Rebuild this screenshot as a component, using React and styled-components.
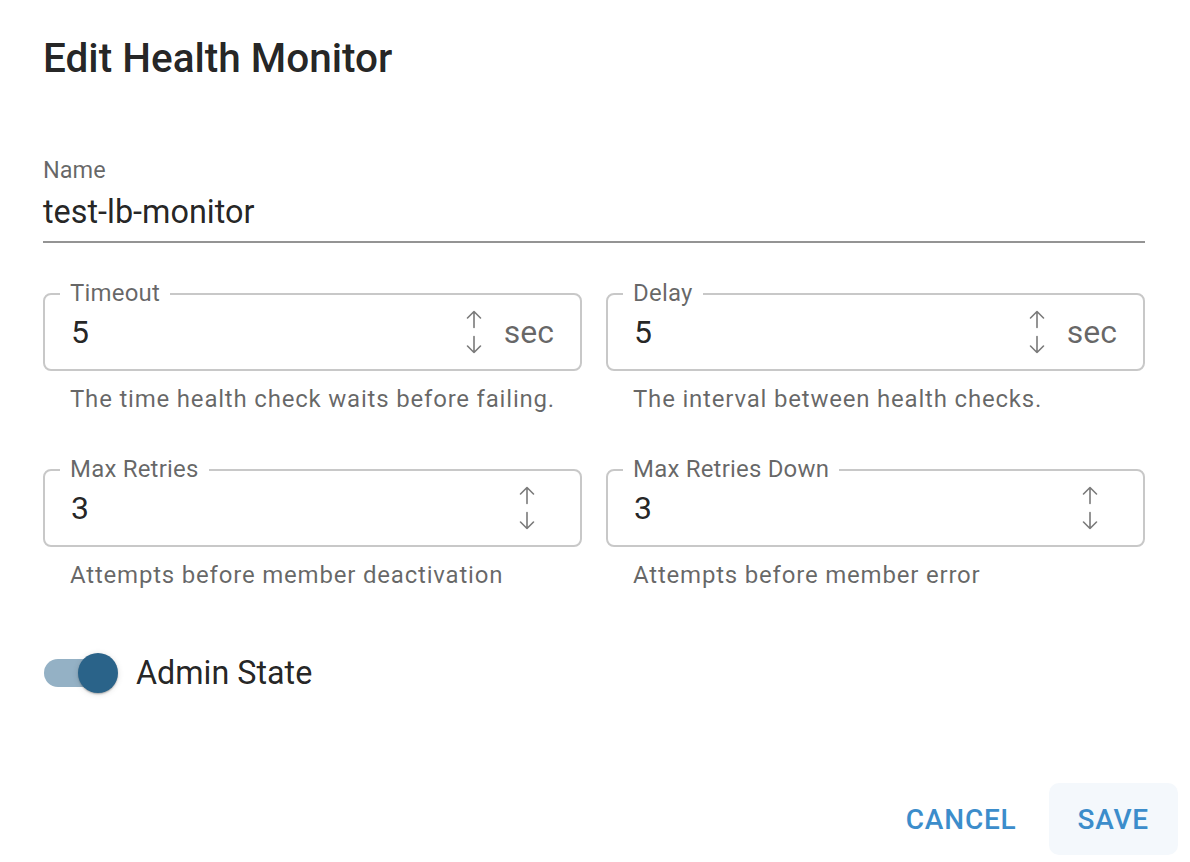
import React from 'react'
import styled, { createGlobalStyle } from 'styled-components'

const GlobalStyle = createGlobalStyle`
    html, body {
        margin: 0;
        padding: 0;
        background: #ffffff;
    }
    body {
        font-family: Roboto, "Liberation Sans", Arial, sans-serif;
        color: rgba(0, 0, 0, 0.87);
    }
`

function SpinArrows() {
  return (
    <Spinner width="16" height="44" viewBox="0 0 16 44">
        <path d="M8 1.5V17.5M1.5 8L8 1.5L14.5 8" />
        <path d="M8 26.5V42.5M1.5 36L8 42.5L14.5 36" />
    </Spinner>
  )
}

function NumberField({label, value, unit, helper}) {
  return (
    <FieldWrap>
        <OutlinedBox unit={unit}>
            <FloatLabel>{label}</FloatLabel>
            <Value>{value}</Value>
            <SpinArrows />
            {unit && <Unit>{unit}</Unit>}
        </OutlinedBox>
        <Helper>{helper}</Helper>
    </FieldWrap>
  )
}

function App() {
  return (
    <>
        <GlobalStyle />
        <Dialog>
            <Content>
                <Title>Edit Health Monitor</Title>
                <NameField>
                    <NameLabel>Name</NameLabel>
                    <NameInput>test-lb-monitor</NameInput>
                </NameField>
                <FieldGrid>
                    <NumberField label="Timeout" value="5" unit="sec" helper="The time health check waits before failing." />
                    <NumberField label="Delay" value="5" unit="sec" helper="The interval between health checks." />
                    <NumberField label="Max Retries" value="3" helper="Attempts before member deactivation" />
                    <NumberField label="Max Retries Down" value="3" helper="Attempts before member error" />
                </FieldGrid>
                <SwitchRow>
                    <Track>
                        <Thumb />
                    </Track>
                    <SwitchLabel>Admin State</SwitchLabel>
                </SwitchRow>
            </Content>
            <Actions>
                <ActionButton>Cancel</ActionButton>
                <ActionButton filled>Save</ActionButton>
            </Actions>
        </Dialog>
    </>
  )
}

const Dialog = styled.div`
    width: 1190px;
    height: 862px;
    display: flex;
    flex-direction: column;
    box-sizing: border-box;
`

const Content = styled.div`
    padding: 26px 45px 0 43px;
    display: flex;
    flex-direction: column;
`

const Title = styled.h2`
    margin: 0;
    font-size: 40.5px;
    line-height: 64px;
    font-weight: 500;
    color: rgba(0, 0, 0, 0.87);
`

const NameField = styled.div`
    margin-top: 68px;
    display: flex;
    flex-direction: column;
`

const NameLabel = styled.label`
    font-size: 23.5px;
    line-height: 24px;
    color: rgba(0, 0, 0, 0.6);
`

const NameInput = styled.div`
    margin-top: 11px;
    font-size: 32.4px;
    line-height: 38px;
    padding-bottom: 10px;
    border-bottom: 2px solid rgba(0, 0, 0, 0.42);
    color: rgba(0, 0, 0, 0.87);
`

const FieldGrid = styled.div`
    margin-top: 50px;
    display: grid;
    grid-template-columns: 1fr 1fr;
    column-gap: 24px;
    row-gap: 58px;
`

const FieldWrap = styled.div`
    display: flex;
    flex-direction: column;
`

const OutlinedBox = styled.div`
    position: relative;
    height: 78px;
    box-sizing: border-box;
    border: 2px solid #c8c8c8;
    border-radius: 8px;
    display: flex;
    align-items: center;
    padding: 0 ${(props) => props.unit ? '26px' : '45px'} 0 26px;
`

const FloatLabel = styled.span`
    position: absolute;
    left: 15px;
    top: -14px;
    padding: 0 10px;
    background: #ffffff;
    font-size: 24px;
    line-height: 24px;
    letter-spacing: 0.2px;
    color: rgba(0, 0, 0, 0.6);
`

const Value = styled.span`
    flex: 1;
    font-size: 32px;
    line-height: 38px;
    color: rgba(0, 0, 0, 0.87);
`

const Spinner = styled.svg`
    flex: none;
    fill: none;
    stroke: #7a7a7a;
    stroke-width: 1.6;
    stroke-linecap: round;
    stroke-linejoin: round;
`

const Unit = styled.span`
    margin-left: 22px;
    font-size: 32px;
    line-height: 38px;
    color: rgba(0, 0, 0, 0.6);
`

const Helper = styled.p`
    margin: 16px 0 0 27px;
    font-size: 24px;
    line-height: 24px;
    letter-spacing: 0.8px;
    color: rgba(0, 0, 0, 0.6);
`

const SwitchRow = styled.div`
    margin-top: 66px;
    height: 40px;
    display: flex;
    align-items: center;
`

const Track = styled.div`
    position: relative;
    width: 68px;
    height: 28px;
    margin-left: 1px;
    border-radius: 14px;
    background: #94b1c5;
`

const Thumb = styled.div`
    position: absolute;
    left: 34px;
    top: -6px;
    width: 40px;
    height: 40px;
    border-radius: 50%;
    background: #2a6389;
    box-shadow: 0 2px 2px -1px rgba(0, 0, 0, 0.2), 0 1px 2px 0 rgba(0, 0, 0, 0.14), 0 1px 6px 0 rgba(0, 0, 0, 0.12);
`

const SwitchLabel = styled.span`
    margin-left: 24px;
    font-size: 32.3px;
    line-height: 38px;
    color: rgba(0, 0, 0, 0.87);
`

const Actions = styled.div`
    margin-top: auto;
    padding: 0 12px 7px 0;
    display: flex;
    justify-content: flex-end;
    gap: 3px;
`

const ActionButton = styled.button`
    height: 72px;
    padding: 0 29px;
    border: none;
    border-radius: 10px;
    background: ${(props) => props.filled ? '#f4f8fc' : 'transparent'};
    font-family: Roboto, "Liberation Sans", Arial, sans-serif;
    font-size: 28px;
    font-weight: 500;
    letter-spacing: 0.8px;
    text-transform: uppercase;
    color: #3c8dcb;
    cursor: pointer;
`

export default App
